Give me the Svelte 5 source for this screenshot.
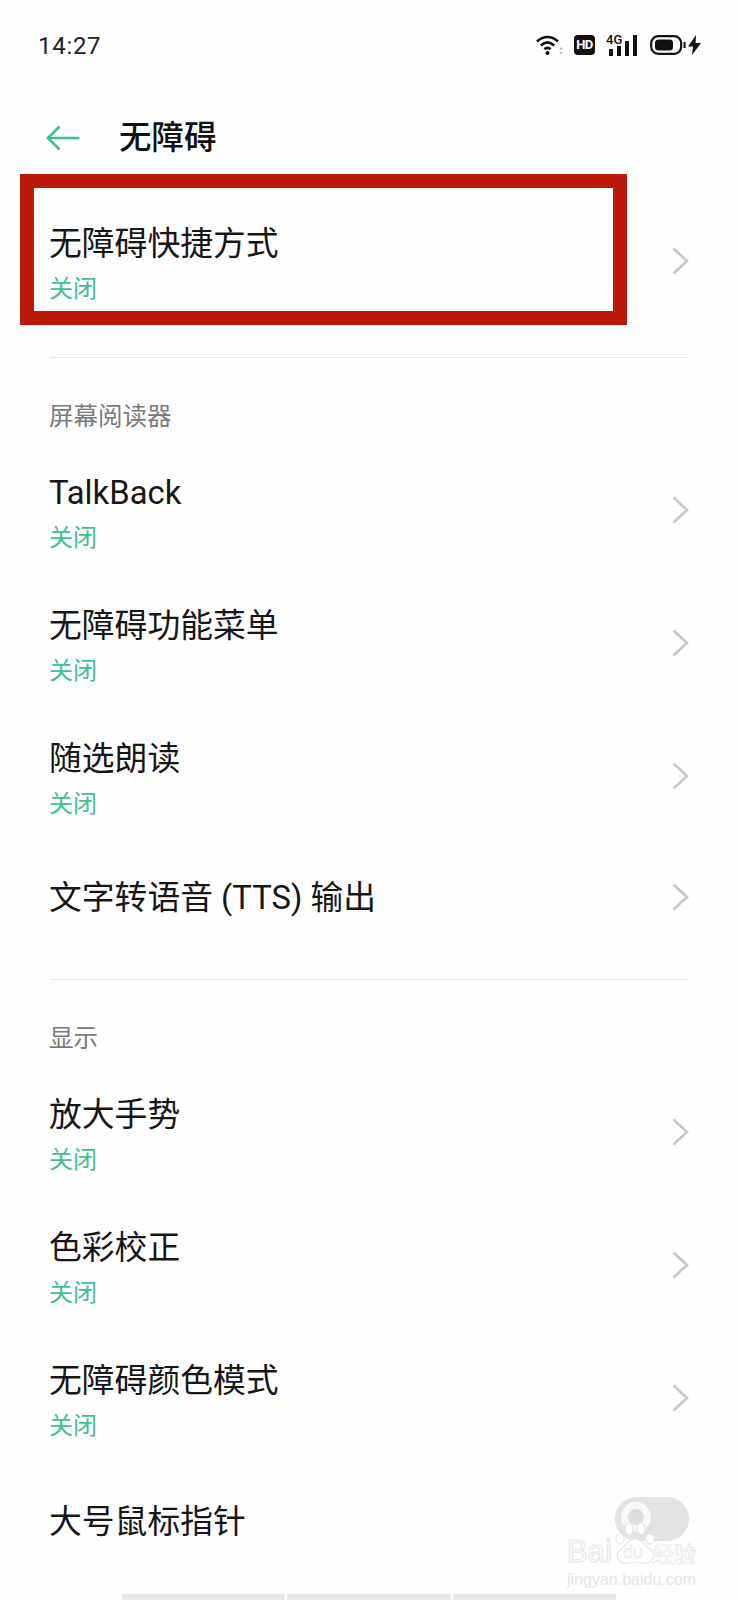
<script lang="ts">
	type Row = { title: string; sub?: string };
	type Section = { label?: string; rows: Row[] };

	const off = '关闭';

	const sections: Section[] = [
		{ rows: [{ title: '无障碍快捷方式', sub: off }] },
		{
			label: '屏幕阅读器',
			rows: [
				{ title: 'TalkBack', sub: off },
				{ title: '无障碍功能菜单', sub: off },
				{ title: '随选朗读', sub: off },
				{ title: '文字转语音 (TTS) 输出' }
			]
		},
		{
			label: '显示',
			rows: [
				{ title: '放大手势', sub: off },
				{ title: '色彩校正', sub: off },
				{ title: '无障碍颜色模式', sub: off },
				{ title: '大号鼠标指针' }
			]
		}
	];
</script>

<div class="page">
	<div class="status">
		<span class="time">14:27</span>
		<div class="icons">
			<svg class="wifi" width="28" height="22" viewBox="0 0 28 22" fill="none" stroke="#111" stroke-width="2.6">
				<path d="M1 7.5 C7.5 1.5 15.5 1.5 22 7.5" />
				<path d="M4.8 11.5 C9 7.6 14 7.6 18.2 11.5" />
				<path d="M8.4 15.2 C10.5 13.3 12.5 13.3 14.6 15.2" />
				<circle cx="11.5" cy="19" r="2" fill="#111" stroke="none" />
				<path d="M25 13 l-2 2.4 h4 z M25 20.4 l-2 -2.4 h4 z" fill="#bbb" stroke="none" />
			</svg>
			<span class="hd">HD</span>
			<div class="net">
				<span class="four-g">4G</span>
				<svg width="32" height="21" viewBox="0 0 32 21" fill="#111">
					<rect x="3" y="14" width="4" height="7" />
					<rect x="11" y="11" width="4" height="10" />
					<rect x="19" y="6" width="4" height="15" />
					<rect x="27" y="0" width="4" height="21" />
				</svg>
			</div>
			<svg class="battery" width="36" height="20" viewBox="0 0 36 20">
				<rect x="1.2" y="1.2" width="30" height="17.6" rx="7" fill="none" stroke="#111" stroke-width="2.2" />
				<rect x="5" y="4.6" width="18" height="10.8" rx="3.5" fill="#111" />
				<path d="M33.6 7 h2 v6 h-2 z" fill="#111" />
			</svg>
			<svg class="bolt" width="13" height="20" viewBox="0 0 13 20">
				<path d="M8 0 L0 11.5 H5 L4 20 L13 8 H7.6 Z" fill="#111" />
			</svg>
		</div>
	</div>

	<header class="head">
		<svg class="back" width="34" height="26" viewBox="0 0 34 26" fill="none" stroke="#3fc08f" stroke-width="2.6">
			<path d="M1.5 13 H33.5" />
			<path d="M13.5 1.5 L2 13 L13.5 24.5" />
		</svg>
		<h1>无障碍</h1>
	</header>

	{#each sections as section, s}
		{#if section.label}
			<div class="label">{section.label}</div>
		{/if}
		{#each section.rows as row, r}
			<div class="row" class:single={!row.sub} class:end={s === sections.length - 1 && r === section.rows.length - 1}>
				<div class="text">
					<div class="title">{row.title}</div>
					{#if row.sub}<div class="sub">{row.sub}</div>{/if}
				</div>
				{#if !(s === sections.length - 1 && r === section.rows.length - 1)}
					<svg class="chev" width="17" height="28" viewBox="0 0 17 28" fill="none" stroke="#c8c8c8" stroke-width="2.6">
						<path d="M1.5 1.5 L15 14 L1.5 26.5" />
					</svg>
				{/if}
				{#if s === 0 && r === 0}<div class="mark"></div>{/if}
			</div>
		{/each}
		{#if s < sections.length - 1}<hr class="rule" />{/if}
	{/each}

	<div class="toggle"><span class="knob"></span></div>
	<div class="wm">
		<svg class="paw" width="46" height="46" viewBox="0 0 46 46" fill="#fff" stroke="#e6e6e6" stroke-width="1.2">
			<ellipse cx="7" cy="19" rx="4" ry="5" />
			<ellipse cx="16" cy="9" rx="4" ry="6" />
			<ellipse cx="28" cy="9" rx="4" ry="6" />
			<ellipse cx="37" cy="19" rx="4" ry="5" />
			<path d="M22 19 C29 19 31 25 38 30 C44 36 38 44 30 43 C26 42 18 42 14 43 C6 44 1 36 7 30 C13 26 15 19 22 19 Z" />
		</svg>
		<div class="wm-main">
			<span class="wm-logo">Bai</span>
			<span class="wm-du">du</span>
			<span class="wm-cn">经验</span>
		</div>
		<div class="wm-url">jingyan.baidu.com</div>
	</div>
	<div class="tabs"><span></span><span></span><span></span></div>
</div>

<style>
	:global(body) {
		margin: 0;
		background: #fff;
	}

	.page {
		position: relative;
		width: 738px;
		height: 1600px;
		overflow: hidden;
		background: #fefefe;
		color: #161616;
		font-family: Roboto, 'Noto Sans CJK SC', sans-serif;
	}

	.status {
		height: 90px;
		display: flex;
		align-items: center;
		justify-content: space-between;
		padding: 0 37px 0 38px;
	}

	.time {
		position: relative;
		top: 1px;
		font-size: 24px;
		letter-spacing: 0.7px;
		color: #222;
	}

	.icons {
		display: flex;
		align-items: center;
	}

	.hd {
		width: 21px;
		height: 20px;
		margin-left: 10px;
		border-radius: 4px;
		background: #111;
		color: #fff;
		font-size: 13px;
		font-weight: 700;
		line-height: 20px;
		text-align: center;
		letter-spacing: -0.5px;
	}

	.net {
		position: relative;
		width: 32px;
		height: 21px;
		margin-left: 11px;
	}

	.four-g {
		position: absolute;
		left: 0;
		top: -2px;
		font-size: 13px;
		font-weight: 500;
		line-height: 13px;
		color: #111;
	}

	.battery {
		margin-left: 12px;
	}

	.bolt {
		margin-left: 2px;
	}

	.head {
		height: 96px;
		margin-bottom: 9px;
		display: flex;
		align-items: center;
		padding-left: 46px;
	}

	.back {
		margin-right: 39px;
	}

	h1 {
		margin: 0;
		font-size: 32.5px;
		font-weight: 500;
		line-height: 44px;
		color: #111;
	}

	.row {
		position: relative;
		height: 133px;
		box-sizing: border-box;
		display: flex;
		align-items: center;
		justify-content: space-between;
		padding: 0 49px 0 49px;
	}

	.row.single {
		height: 110px;
	}

	.row.end {
		padding-top: 4px;
	}

	.text {
		align-self: flex-start;
		padding-top: 27px;
	}

	.single .text {
		align-self: center;
		padding-top: 0;
	}

	.title {
		font-size: 32.8px;
		line-height: 44px;
	}

	.sub {
		font-size: 24px;
		line-height: 46px;
		color: #41c08f;
	}

	.chev {
		display: block;
		position: relative;
		top: -1px;
	}

	/* annotation frame drawn over the screenshot */
	.mark {
		position: absolute;
		left: 20px;
		top: -21px;
		width: 607px;
		height: 151px;
		box-sizing: border-box;
		border: 14px solid #bb1a0b;
		pointer-events: none;
	}

	.rule {
		height: 1px;
		margin: 29px 49px 0 50px;
		border: 0;
		background: #e6e6e6;
	}

	.single + .rule {
		margin-top: 26px;
	}

	.label {
		height: 86px;
		box-sizing: border-box;
		padding: 42px 0 0 49px;
		font-size: 24.5px;
		line-height: 34px;
		color: #7a7a7a;
	}

	.toggle {
		position: absolute;
		left: 615px;
		top: 1497px;
		width: 74px;
		height: 44px;
		border-radius: 22px;
		background: #e3e3e3;
	}

	.knob {
		position: absolute;
		left: 6px;
		top: 5px;
		width: 16px;
		height: 16px;
		border: 7px solid #f8f8f8;
		border-radius: 50%;
		background: #dcdcdc;
	}

	.wm {
		position: absolute;
		left: 567px;
		top: 1520px;
		width: 132px;
		color: #e6e6e6;
		font-family: 'Liberation Sans', 'Noto Sans CJK SC', sans-serif;
	}

	.paw {
		position: absolute;
		left: 46px;
		top: 0;
	}

	.wm-main {
		position: relative;
		display: flex;
		align-items: center;
		margin-top: 18px;
		height: 28px;
		white-space: nowrap;
		-webkit-text-stroke: 1px #e6e6e6;
		color: #fff;
	}

	.wm-logo {
		width: 47px;
		font-size: 31px;
	}

	.wm-du {
		width: 38px;
		font-size: 18px;
		text-align: center;
		-webkit-text-stroke: 0.6px #e6e6e6;
	}

	.wm-cn {
		font-size: 22px;
		-webkit-text-stroke: 0.6px #e6e6e6;
	}

	.wm-url {
		margin-top: 5px;
		font-size: 16px;
		line-height: 18px;
		white-space: nowrap;
		color: #e6e6e6;
	}

	.tabs {
		position: absolute;
		left: 122px;
		top: 1594px;
		width: 494px;
		height: 6px;
		display: flex;
		gap: 2px;
	}

	.tabs span {
		flex: 1;
		background: #e8e8e8;
	}
</style>
